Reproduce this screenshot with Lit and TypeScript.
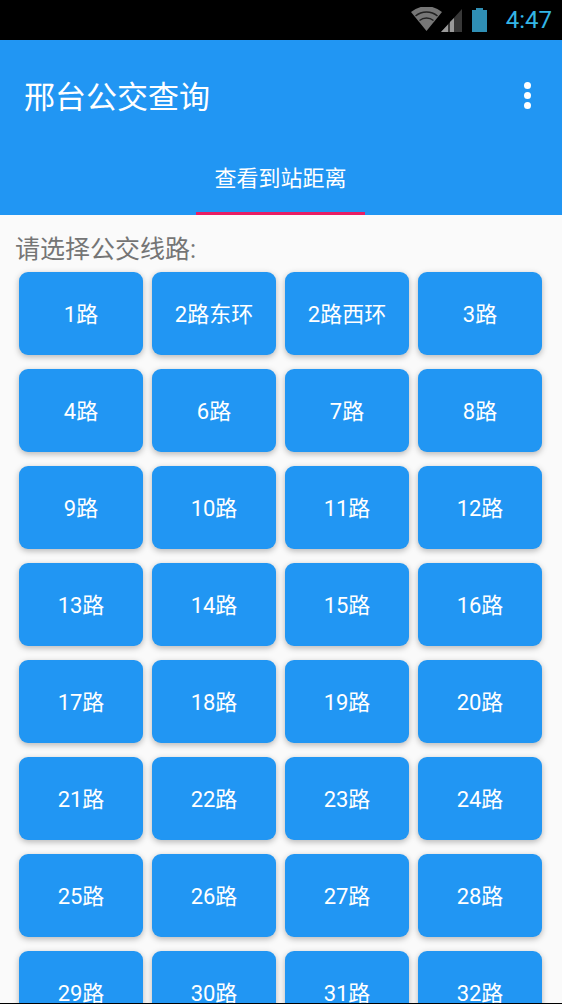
import { LitElement, html, css } from "lit";
import { customElement } from "lit/decorators.js";

const ROUTES = ["1路","2路东环","2路西环","3路","4路","6路","7路","8路","9路","10路","11路","12路","13路","14路","15路","16路","17路","18路","19路","20路","21路","22路","23路","24路","25路","26路","27路","28路","29路","30路","31路","32路"];

@customElement("app-root")
export class AppRoot extends LitElement {
  static styles = css`
    :host { display: flex; flex-direction: column; height: 1004px; overflow: hidden; background: #fafafa;
      font-family: Roboto, "Noto Sans CJK SC", sans-serif; border-bottom: 1px solid #000; box-sizing: border-box; }
    .status { flex: none; height: 40px; background: #000; display: flex; align-items: center; justify-content: flex-end; padding-right: 9px; }
    .status svg { display: block; }
    .battery { margin-left: 8px; }
    .clock { font-size: 24px; color: #33b5e5; margin-left: 16px; line-height: 40px; width: 48px; text-align: right; padding-right: 1px; }
    .bar { flex: none; height: 175px; background: #2196f3; display: flex; flex-direction: column; }
    .top { height: 112px; display: flex; align-items: center; justify-content: space-between; padding: 0 31px 0 24px; }
    .title { font-size: 31px; color: #fff; margin-bottom: 4px; }
    .dots { display: flex; flex-direction: column; gap: 3px; margin-bottom: 1px; }
    .dots i { display: block; width: 7px; height: 7px; border-radius: 50%; background: #fff; }
    .tabs { flex: 1; display: flex; justify-content: center; padding-right: 1px; }
    .tab { width: 169px; box-sizing: border-box; border-bottom: 3px solid #e91e63; color: #fff; font-size: 22px; text-align: center; line-height: 30px; padding-top: 12px; }
    .main { flex: 1; min-height: 0; padding: 20px 20px 0 19px; }
    .hint { font-size: 25px; line-height: 32px; color: #757575; margin: -1px 0 6px -4px; white-space: nowrap; height: 32px; }
    .grid { display: grid; grid-template-columns: repeat(4, 124px); grid-auto-rows: 83px; column-gap: 9px; row-gap: 14px; }
    .btn { background: #2196f3; color: #fff; border-radius: 9px; display: flex; align-items: center; justify-content: center;
      font-size: 22px; padding-bottom: 3px; box-sizing: border-box; box-shadow: 0 2px 6px rgba(0,0,0,0.28); }
  `;

  render() {
    return html`
      <div class="status">
        <svg width="52" height="26" viewBox="0 0 52 26">
          <path d="M0 5 A24 24 0 0 1 31 5 L15.5 24 Z" fill="#767676"/>
          <path d="M4.5 9 A17 17 0 0 1 26.5 9 M8.5 13.5 A11 11 0 0 1 22.5 13.5" fill="none" stroke="#222" stroke-width="1.5"/>
          <path d="M30 25 L51 2 V25 Z" fill="#383838"/>
          <path d="M30 25 L37 17.5 V25 Z M39 15 L43 11 V25 H39 Z" fill="#9a9a9a"/>
        </svg>
        <svg class="battery" width="17" height="26" viewBox="0 0 17 26">
          <path d="M5 1 H12 V3 H16 V25 H1 V3 H5 Z" fill="#2f8fb5"/>
        </svg>
        <span class="clock">4:47</span>
      </div>
      <div class="bar">
        <div class="top">
          <span class="title">邢台公交查询</span>
          <span class="dots"><i></i><i></i><i></i></span>
        </div>
        <div class="tabs"><div class="tab">查看到站距离</div></div>
      </div>
      <div class="main">
        <div class="hint">请选择公交线路:</div>
        <div class="grid">${ROUTES.map((r) => html`<div class="btn">${r}</div>`)}</div>
      </div>
    `;
  }
}
